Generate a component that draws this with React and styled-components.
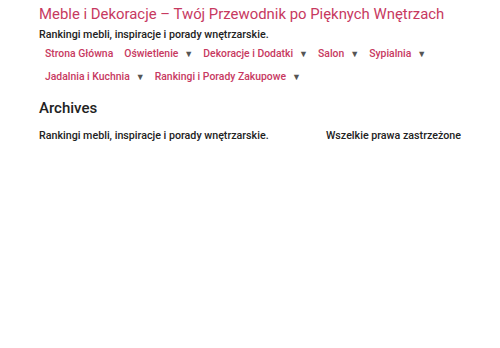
import React from "react";
import styled, { createGlobalStyle } from "styled-components";

const GlobalStyle = createGlobalStyle`
  body {
    margin: 0;
    background: #ffffff;
    font-family: Roboto, "Noto Sans", sans-serif;
    color: #222;
  }
`;

const menu = [
  { title: "Strona Główna" },
  { title: "Oświetlenie", sub: true },
  { title: "Dekoracje i Dodatki", sub: true },
  { title: "Salon", sub: true },
  { title: "Sypialnia", sub: true },
  { title: "Jadalnia i Kuchnia", sub: true },
  { title: "Rankingi i Porady Zakupowe", sub: true },
];

const App = () => (
  <>
    <GlobalStyle />
    <Page>
      <Header>
        <SiteTitle href="#">Meble i Dekoracje – Twój Przewodnik po Pięknych Wnętrzach</SiteTitle>
        <Tagline>Rankingi mebli, inspiracje i porady wnętrzarskie.</Tagline>
        <Nav>
          {menu.map(({ title, sub }, i) => (
            <NavItem key={i}>
              <NavLink href="#">{title}</NavLink>
              {sub && <Caret>▼</Caret>}
            </NavItem>
          ))}
        </Nav>
      </Header>
      <Main>
        <PageTitle>Archives</PageTitle>
      </Main>
      <Footer>
        <span>Rankingi mebli, inspiracje i porady wnętrzarskie.</span>
        <span>Wszelkie prawa zastrzeżone</span>
      </Footer>
    </Page>
  </>
);

export default App;

const Page = styled.div`
  padding: 4px 39px 0;
`;

const Header = styled.header`
  display: flex;
  flex-direction: column;
`;

const SiteTitle = styled.a`
  color: #c7395f;
  font-size: 14.9px;
  line-height: 20px;
  text-decoration: none;
`;

const Tagline = styled.p`
  margin: 4px 0 0;
  font-size: 10.7px;
  font-weight: 500;
  line-height: 14px;
  color: #222;
`;

const Nav = styled.nav`
  display: flex;
  flex-wrap: wrap;
  padding: 0 6px;
`;

const NavItem = styled.div`
  display: flex;
  align-items: center;
  height: 23px;
  margin-right: 11px;
`;

const NavLink = styled.a`
  color: #c7395f;
  font-size: 10.4px;
  font-weight: 500;
  text-decoration: none;
`;

const Caret = styled.span`
  color: #555;
  font-size: 9px;
  margin-left: 6px;
  margin-right: -1px;
`;

const Main = styled.main`
  margin-top: 10px;
`;

const PageTitle = styled.h1`
  margin: 0;
  font-size: 15px;
  font-weight: 500;
  line-height: 20px;
  color: #222;
`;

const Footer = styled.footer`
  display: flex;
  justify-content: space-between;
  margin-top: 11px;
  font-size: 10.7px;
  font-weight: 500;
  color: #222;
`;
